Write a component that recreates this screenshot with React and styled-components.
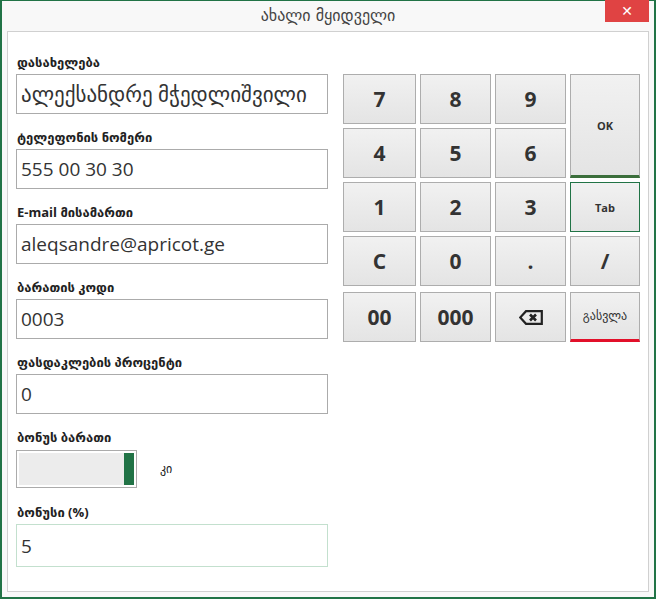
import React from "react";
import styled, { createGlobalStyle } from "styled-components";

const GlobalStyle = createGlobalStyle`
  html, body {
    margin: 0;
    padding: 0;
    background: #f8f8f8;
  }
  * {
    box-sizing: border-box;
  }
`;

const fields = [
  { id: "name", label: "დასახელება", value: "ალექსანდრე მჭედლიშვილი", size: 21 },
  { id: "phone", label: "ტელეფონის ნომერი", value: "555 00 30 30" },
  { id: "email", label: "E-mail მისამართი", value: "aleqsandre@apricot.ge" },
  { id: "card", label: "ბარათის კოდი", value: "0003" },
  { id: "discount", label: "ფასდაკლების პროცენტი", value: "0" },
];

const keys = [
  { k: "7" }, { k: "8" }, { k: "9" }, { k: "OK", kind: "ok", small: true },
  { k: "4" }, { k: "5" }, { k: "6" },
  { k: "1" }, { k: "2" }, { k: "3" }, { k: "Tab", kind: "tab", small: true },
  { k: "C" }, { k: "0" }, { k: "." }, { k: "/" },
  { k: "00", last: true }, { k: "000", last: true }, { k: "back", last: true },
  { k: "გასვლა", kind: "exit", small: true, last: true },
];

const BackspaceIcon = () => (
  <svg width="24" height="15" viewBox="0 0 24 15">
    <path
      d="M7 1.2 H22.8 V13.8 H7 L1.2 7.5 Z"
      fill="none"
      stroke="#222"
      strokeWidth="2.2"
      strokeLinejoin="miter"
    />
    <path d="M11 4.5 L17 10.5 M17 4.5 L11 10.5" stroke="#222" strokeWidth="2.6" />
  </svg>
);

const App = () => {
  return (
    <>
      <GlobalStyle />
      <Window>
        <TitleBar>
          <span />
          <Title>ახალი მყიდველი</Title>
          <CloseButton>✕</CloseButton>
        </TitleBar>
        <Panel>
          <FormColumn>
            {fields.map((f) => (
              <Field key={f.id}>
                <Label>{f.label}</Label>
                <TextInput readOnly value={f.value} $size={f.size} />
              </Field>
            ))}
            <Field>
              <Label>ბონუს ბარათი</Label>
              <ToggleRow>
                <Toggle>
                  <ToggleFill />
                  <ToggleKnob />
                </Toggle>
                <ToggleText>კი</ToggleText>
              </ToggleRow>
            </Field>
            <Field>
              <Label>ბონუსი (%)</Label>
              <TextInput readOnly value="5" $focused $height={43} />
            </Field>
          </FormColumn>

          <Keypad>
            {keys.map((key) => (
              <Key
                key={key.k}
                $kind={key.kind}
                $small={key.small}
                $last={key.last}
              >
                {key.k === "back" ? <BackspaceIcon /> : key.k}
              </Key>
            ))}
          </Keypad>
        </Panel>
      </Window>
    </>
  );
};

export default App;

const Window = styled.div`
  width: 656px;
  height: 599px;
  background: #f8f8f8;
  border: 2px solid #217346;
  border-top-width: 1px;
  display: flex;
  flex-direction: column;
`;

const TitleBar = styled.div`
  height: 30px;
  display: grid;
  grid-template-columns: 1fr auto 1fr;
  align-items: start;
`;

const Title = styled.div`
  font-family: "DejaVu Sans", "Open Sans", sans-serif;
  font-size: 16px;
  color: #444;
  line-height: 30px;
`;

const CloseButton = styled.div`
  justify-self: end;
  width: 44px;
  height: 22px;
  margin-top: -1px;
  margin-right: 5px;
  background: #e04343;
  color: #fff;
  font-family: "DejaVu Sans", sans-serif;
  font-size: 14px;
  font-weight: bold;
  display: flex;
  align-items: center;
  justify-content: center;
`;

const Panel = styled.div`
  flex: 1;
  margin: 0 5px 5px 5px;
  background: #fff;
  border: 1px solid #d0d0d0;
  padding: 22px 8px 0 8px;
  display: flex;
  gap: 15px;
  align-items: flex-start;
`;

const FormColumn = styled.div`
  width: 312px;
  display: flex;
  flex-direction: column;
  gap: 15px;
`;

const Field = styled.div`
  display: flex;
  flex-direction: column;
`;

const Label = styled.label`
  font-family: "Open Sans", "DejaVu Sans", sans-serif;
  font-size: 13px;
  font-weight: bold;
  color: #222;
  line-height: 16px;
  margin: 0 0 4px 1px;
`;

const TextInput = styled.input`
  width: 312px;
  height: ${(p) => p.$height || 40}px;
  border: 1px solid ${(p) => (p.$focused ? "#c3e0ce" : "#ababab")};
  background: #fff;
  padding: 0 4px;
  font-family: "Open Sans", "DejaVu Sans", sans-serif;
  font-size: ${(p) => p.$size || 19}px;
  color: #333;
  outline: none;
`;

const ToggleRow = styled.div`
  height: 40px;
  display: flex;
  align-items: center;
  gap: 23px;
`;

const Toggle = styled.div`
  width: 121px;
  height: 38px;
  border: 1px solid #ababab;
  padding: 2px;
  display: flex;
`;

const ToggleFill = styled.div`
  flex: 1;
  background: #ececec;
`;

const ToggleKnob = styled.div`
  width: 10px;
  background: #217346;
`;

const ToggleText = styled.span`
  font-family: "DejaVu Sans", sans-serif;
  font-size: 12px;
  color: #222;
`;

const Keypad = styled.div`
  margin-top: 20px;
  display: grid;
  grid-template-columns: 73px 71px 71px 70px;
  grid-template-rows: 50px 50px 50px 50px 52px;
  gap: 4px;
`;

const Key = styled.div`
  ${(p) => p.$kind === "ok" && "grid-row: span 2;"}
  ${(p) => p.$last && "align-self: end; height: 50px;"}
  display: flex;
  align-items: center;
  justify-content: center;
  background: linear-gradient(#f1f1f1, #e4e4e4);
  border: 1px solid
    ${(p) => (p.$kind === "tab" ? "#217346" : "#adadad")};
  border-bottom: ${(p) =>
    p.$kind === "ok"
      ? "3px solid #3b6e3b"
      : p.$kind === "exit"
      ? "3px solid #e2102a"
      : p.$kind === "tab"
      ? "1px solid #217346"
      : "1px solid #adadad"};
  font-family: ${(p) =>
    p.$kind === "exit"
      ? '"DejaVu Sans", sans-serif'
      : '"Open Sans", "DejaVu Sans", sans-serif'};
  font-size: ${(p) => (p.$kind === "exit" ? "12px" : p.$small ? "11px" : "21px")};
  font-weight: ${(p) => (p.$kind === "exit" ? "normal" : "bold")};
  color: #333;
`;
